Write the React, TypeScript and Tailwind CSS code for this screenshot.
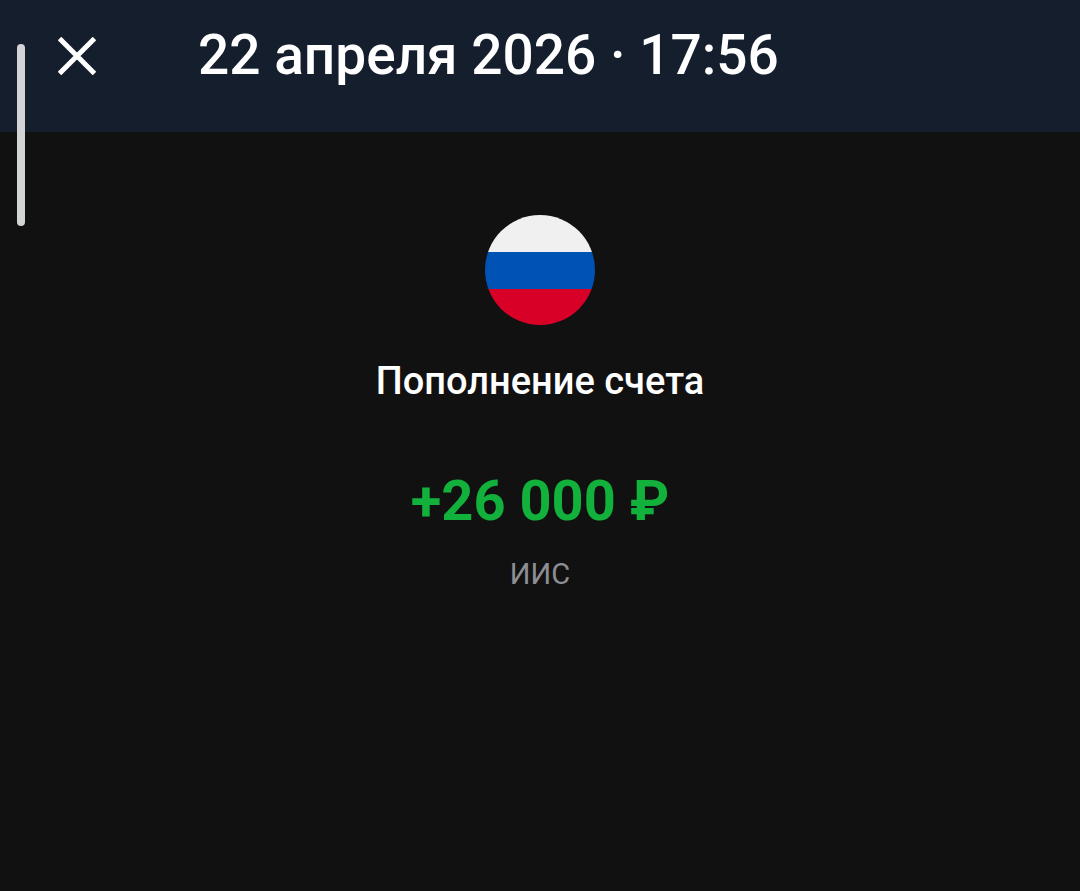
import React from 'react';

const RussiaFlag = () => (
  <svg width="110" height="110" viewBox="0 0 110 110" className="block">
    <defs>
      <clipPath id="flag-circle">
        <circle cx="55" cy="55" r="55" />
      </clipPath>
    </defs>
    <g clipPath="url(#flag-circle)">
      <rect x="0" y="0" width="110" height="37" fill="#f0f0f0" />
      <rect x="0" y="37" width="110" height="37" fill="#0052b4" />
      <rect x="0" y="74" width="110" height="36" fill="#d80027" />
    </g>
  </svg>
);

export default function App() {
  return (
    <div className="relative flex h-[891px] w-[1080px] flex-col overflow-hidden bg-[#111111] font-['Roboto',sans-serif] text-white">
      {/* Scroll thumb */}
      <div className="absolute left-[17px] top-[44px] h-[182px] w-2 rounded-full bg-[#d3d4d6]" />

      {/* Header */}
      <header className="flex h-[132px] shrink-0 items-start bg-[#141e2d] pl-[58px] pt-[37px]">
        <svg width="38" height="38" viewBox="0 0 38 38" fill="none" stroke="#ffffff" strokeWidth="5">
          <path d="M1.5 1.5 L36.5 36.5 M36.5 1.5 L1.5 36.5" />
        </svg>
        <h1 className="ml-[102px] mt-[-12px] text-[55px] font-medium leading-[61px] whitespace-nowrap">
          22 апреля 2026 · 17:56
        </h1>
      </header>

      {/* Operation */}
      <main className="flex flex-col items-center pt-[83px]">
        <RussiaFlag />
        <p className="mt-[32px] text-[38px] font-medium leading-[48px]">Пополнение счета</p>
        <p className="mt-[63px] text-[56px] font-bold leading-[66px] text-[#12b13c]">+26 000 ₽</p>
        <p className="mt-[21px] text-[29px] leading-[38px] text-[#8e8e93]">ИИС</p>
      </main>
    </div>
  );
}
